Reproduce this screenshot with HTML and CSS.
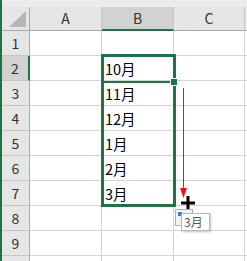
FILE: index.html
```html
<!DOCTYPE html>
<html>
<head>
  <title>Fill series</title>
  <link rel="stylesheet" href="styles.css">
</head>
<body>
  <div class="window">
    <div class="topbar"></div>
    <div class="sheet">
      <div class="corner">
        <svg width="27" height="23" viewBox="0 0 27 23"><polygon points="7,20 24,4 24,20" fill="#b6b6b6"/></svg>
      </div>
      <div class="colhead">A</div>
      <div class="colhead active">B</div>
      <div class="colhead">C</div>
      <div class="colhead edge"></div>

      <div class="rowhead">1</div><div class="cell"></div><div class="cell"></div><div class="cell"></div><div class="cell edge"></div>
      <div class="rowhead active">2</div><div class="cell"></div><div class="cell">10月</div><div class="cell"></div><div class="cell edge"></div>
      <div class="rowhead">3</div><div class="cell"></div><div class="cell">11月</div><div class="cell"></div><div class="cell edge"></div>
      <div class="rowhead">4</div><div class="cell"></div><div class="cell">12月</div><div class="cell"></div><div class="cell edge"></div>
      <div class="rowhead">5</div><div class="cell"></div><div class="cell">1月</div><div class="cell"></div><div class="cell edge"></div>
      <div class="rowhead">6</div><div class="cell"></div><div class="cell">2月</div><div class="cell"></div><div class="cell edge"></div>
      <div class="rowhead">7</div><div class="cell"></div><div class="cell">3月</div><div class="cell"></div><div class="cell edge"></div>
      <div class="rowhead">8</div><div class="cell"></div><div class="cell"></div><div class="cell"></div><div class="cell edge"></div>
      <div class="rowhead">9</div><div class="cell"></div><div class="cell"></div><div class="cell"></div><div class="cell edge"></div>
      <div class="rowhead"></div><div class="cell"></div><div class="cell"></div><div class="cell"></div><div class="cell edge"></div>

      <!-- selection and drag overlay -->
      <div class="selection"></div>
      <div class="active-cell"></div>
      <div class="handle"></div>
      <div class="arrow">
        <svg width="9" height="112" viewBox="0 0 9 112">
          <line x1="4.5" y1="0" x2="4.5" y2="104" stroke="#e81123" stroke-width="1"/>
          <polygon points="1,100 8,100 4.5,110" fill="#e81123"/>
        </svg>
      </div>
      <div class="cursor">
        <svg width="14" height="14" viewBox="0 0 14 14">
          <rect x="5.5" y="0" width="3" height="14" fill="#000"/>
          <rect x="0" y="5.5" width="14" height="3" fill="#000"/>
        </svg>
      </div>
      <div class="dragicon"><span class="dragbox"></span></div>
      <div class="tip">3月</div>
    </div>
  </div>
</body>
</html>
```

FILE: styles.css
```css
body {
  margin: 0;
  background: #fff;
  font-family: "Noto Sans CJK JP", "Noto Sans", sans-serif;
}

.window {
  width: 247px;
  height: 261px;
  overflow: hidden;
  border-left: 2px solid #217346;
  box-sizing: border-box;
}

.topbar {
  height: 7px;
  background: #ececec;
}

.sheet {
  position: relative;
  display: grid;
  grid-template-columns: 28px 72px 72px 71px 10px;
  grid-template-rows: 24px repeat(10, 25px);
}

.corner,
.colhead,
.rowhead,
.cell {
  box-sizing: border-box;
  border-right: 1px solid #d4d4d4;
  border-bottom: 1px solid #d4d4d4;
}

.corner {
  background: #e6e6e6;
  border-right-color: #ababab;
  border-bottom-color: #ababab;
}

.corner svg {
  display: block;
}

.colhead {
  background: #e6e6e6;
  border-bottom-color: #ababab;
  border-right-color: #c6c6c6;
  color: #333;
  font-size: 14px;
  text-align: center;
  line-height: 23px;
}

.colhead.active {
  background: #d2d2d2;
  border-bottom: 2px solid #217346;
}

.rowhead {
  background: #e6e6e6;
  border-right-color: #ababab;
  border-bottom-color: #c6c6c6;
  color: #333;
  font-size: 14px;
  text-align: center;
  line-height: 25px;
}

.rowhead.active {
  background: #d2d2d2;
  border-right: 2px solid #217346;
}

.cell {
  font-size: 14.5px;
  line-height: 26px;
  padding-left: 3px;
  color: #000;
}

.edge {
  border-right: none;
}

.selection {
  position: absolute;
  left: 99px;
  top: 47px;
  width: 75px;
  height: 153px;
  border: 3px solid #217346;
  box-sizing: border-box;
}

.active-cell {
  position: absolute;
  left: 99px;
  top: 74px;
  width: 72px;
  height: 2px;
  background: #217346;
}

.handle {
  position: absolute;
  left: 168px;
  top: 71px;
  width: 6px;
  height: 6px;
  background: #217346;
  border: 1px solid #fff;
}

.arrow {
  position: absolute;
  left: 177px;
  top: 81px;
}

.arrow svg,
.cursor svg {
  display: block;
}

.cursor {
  position: absolute;
  left: 179px;
  top: 189px;
}

.dragicon {
  position: absolute;
  left: 173px;
  top: 202px;
  width: 18px;
  height: 17px;
  border: 1px solid #b0b0b0;
  background: #f4f4f4;
  box-sizing: border-box;
}

.dragbox {
  position: absolute;
  left: 2px;
  top: 2px;
  width: 4px;
  height: 4px;
  background: #3a78d4;
}

.tip {
  position: absolute;
  left: 179px;
  top: 206px;
  width: 29px;
  height: 18px;
  box-sizing: border-box;
  background: #fff;
  border: 1px solid #b8b8b8;
  box-shadow: 1px 1px 2px rgba(0, 0, 0, 0.25);
  font-size: 12px;
  line-height: 16px;
  color: #555;
  padding-left: 2px;
}
```
